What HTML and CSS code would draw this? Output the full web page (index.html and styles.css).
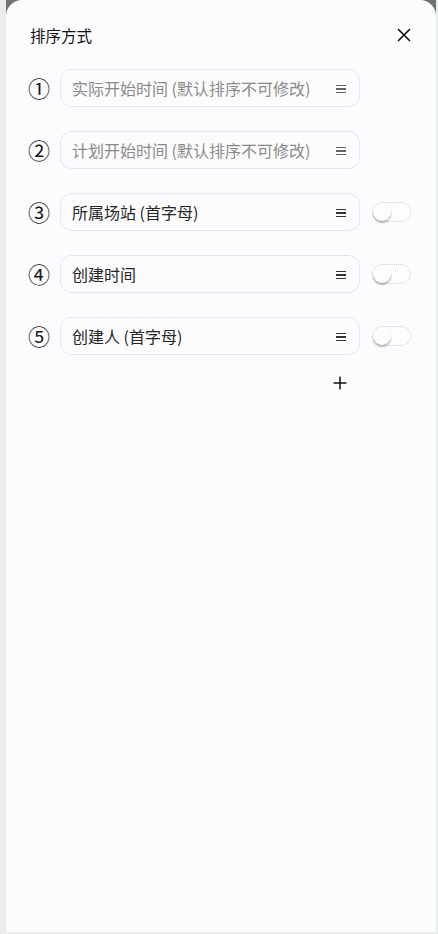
FILE: index.html
```html
<!DOCTYPE html>
<html lang="zh">
<head>
<meta charset="utf-8">
<link rel="stylesheet" href="styles.css">
</head>
<body>
<div class="frame">
  <div class="mask">
    <div class="panel">
      <div class="header">
        <div class="title">排序方式</div>
        <svg class="close" width="14" height="14" viewBox="0 0 14 14"><path d="M1 1 L13 13 M13 1 L1 13" stroke="#111" stroke-width="1.6" fill="none"/></svg>
      </div>
      <div class="list">
        <div class="row">
          <span class="num">①</span>
          <div class="box disabled"><span class="label">实际开始时间 (默认排序不可修改)</span><span class="menu"><i></i><i></i><i></i></span></div>
        </div>
        <div class="row">
          <span class="num">②</span>
          <div class="box disabled"><span class="label">计划开始时间 (默认排序不可修改)</span><span class="menu"><i></i><i></i><i></i></span></div>
        </div>
        <div class="row">
          <span class="num">③</span>
          <div class="box"><span class="label">所属场站 (首字母)</span><span class="menu"><i></i><i></i><i></i></span></div>
          <span class="toggle"><span class="knob"></span></span>
        </div>
        <div class="row">
          <span class="num">④</span>
          <div class="box"><span class="label">创建时间</span><span class="menu"><i></i><i></i><i></i></span></div>
          <span class="toggle"><span class="knob"></span></span>
        </div>
        <div class="row">
          <span class="num">⑤</span>
          <div class="box"><span class="label">创建人 (首字母)</span><span class="menu"><i></i><i></i><i></i></span></div>
          <span class="toggle"><span class="knob"></span></span>
        </div>
      </div>
      <div class="add">
        <svg width="14" height="14" viewBox="0 0 14 14"><path d="M7 0.5 V13.5 M0.5 7 H13.5" stroke="#111" stroke-width="1.5" fill="none"/></svg>
      </div>
    </div>
  </div>
</div>
</body>
</html>
```

FILE: styles.css
```css
html, body {
  margin: 0;
  padding: 0;
  height: 100%;
}
body {
  background: repeating-conic-gradient(#dfe6f7 0 25%, #f5f4e0 0 50%) 0 0 / 2px 2px;
  font-family: "Noto Sans CJK SC", "Noto Sans", sans-serif;
}
.frame {
  box-sizing: border-box;
  height: 934px;
  padding: 0 2px 2px 6px;
  display: flex;
}
.mask {
  flex: 1;
  background: #737373;
  display: flex;
}
.panel {
  flex: 1;
  background: #fcfcfe;
  border-radius: 16px 16px 0 0;
  display: flex;
  flex-direction: column;
}
.header {
  display: flex;
  align-items: center;
  justify-content: space-between;
  padding: 24px 25px 0 24px;
  height: 22px;
}
.title {
  font-size: 15.5px;
  font-weight: 400;
  color: #111;
  line-height: 22px;
}
.close {
  display: block;
}
.list {
  display: flex;
  flex-direction: column;
  gap: 24px;
  margin-top: 23px;
}
.row {
  display: flex;
  align-items: center;
  padding-left: 21px;
}
.num {
  width: 24px;
  font-size: 22px;
  line-height: 24px;
  color: #1a1a1a;
  text-align: center;
  margin-right: 9px;
  margin-top: -2px;
}
.box {
  box-sizing: border-box;
  width: 300px;
  height: 38px;
  border: 1px dotted #cfcfe6;
  border-radius: 12px;
  display: flex;
  align-items: center;
  justify-content: space-between;
  padding: 0 13px 0 11px;
}
.label {
  font-size: 16px;
  color: #262626;
}
.disabled .label {
  color: #8a8a8a;
}
.menu {
  display: flex;
  flex-direction: column;
  gap: 2px;
  width: 10px;
  margin-top: 2px;
}
.menu i {
  display: block;
  height: 1.6px;
  background: #333;
}
.disabled .menu i {
  background: #666;
}
.toggle {
  box-sizing: border-box;
  position: relative;
  width: 39px;
  height: 20px;
  margin-left: 12px;
  border: 1px dotted #c9c9d9;
  border-radius: 10px;
  background: #fdfdfe;
}
.knob {
  position: absolute;
  left: 0;
  top: 0;
  width: 18px;
  height: 18px;
  border-radius: 50%;
  background: #fdfdfd;
  box-shadow: 0 2px 2px rgba(0,0,0,0.28);
}
.add {
  display: flex;
  justify-content: flex-end;
  padding-right: 89px;
  margin-top: 21px;
}
.add svg {
  display: block;
}
```
